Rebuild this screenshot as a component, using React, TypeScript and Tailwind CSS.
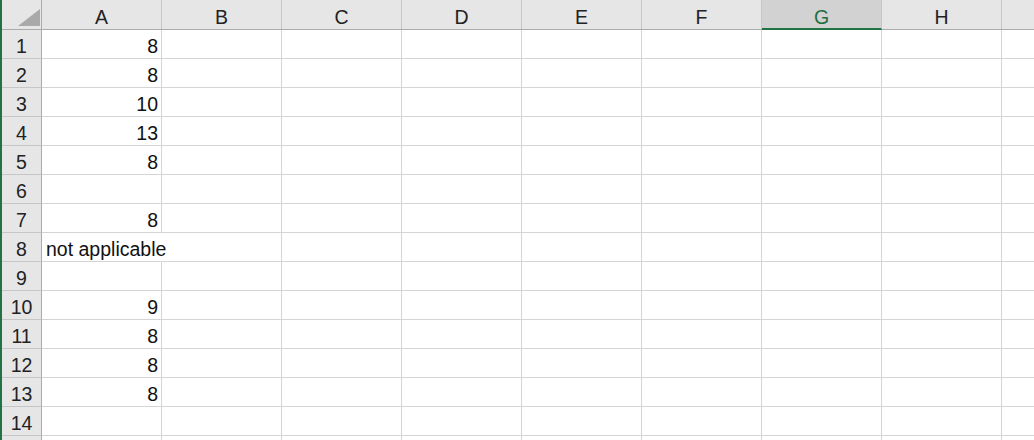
const columns = ['A', 'B', 'C', 'D', 'E', 'F', 'G', 'H']

// column A values, row 1..14 ('' = empty); row 15 is only partly visible
const values: string[] = ['8', '8', '10', '13', '8', '', '8', 'not applicable', '', '9', '8', '8', '8', '', '']

function isNumber(v: string) {
  return v !== '' && !isNaN(Number(v))
}

export default function App() {
  return (
    <div className="flex h-[440px] w-[1034px] overflow-hidden bg-white font-['Liberation_Sans',Arial,sans-serif] text-[19.5px] leading-none text-[#111]">
      {/* Green window edge */}
      <div className="w-[2px] shrink-0 bg-[#217346]" />

      <div className="flex min-w-0 flex-1 flex-col">
        {/* Column headers */}
        <div className="flex h-[30px] shrink-0 border-b border-[#ababab] bg-[#e6e6e6]">
          <div className="flex w-[40px] shrink-0 items-end justify-end border-r border-[#ababab] pr-[1px] pb-[3px]">
            <svg width="22" height="17" viewBox="0 0 22 17">
              <polygon points="0,17 22,17 22,0" fill="#a9a9a9" />
            </svg>
          </div>
          {columns.map((c) =>
            c === 'G' ? (
              <div
                key={c}
                className="-mb-px flex w-[120px] shrink-0 items-end justify-center border-r border-b-2 border-r-[#c6c6c6] border-b-[#217346] bg-[#d2d2d2] pb-[1px] text-[#1f6e43]"
              >
                {c}
              </div>
            ) : (
              <div
                key={c}
                className="flex w-[120px] shrink-0 items-end justify-center border-r border-[#c6c6c6] pb-[2px] text-[#222]"
              >
                {c}
              </div>
            )
          )}
          <div className="flex-1" />
        </div>

        {/* Rows */}
        {values.map((v, i) => (
          <div key={i} className="flex h-[29px] shrink-0">
            <div className="flex w-[40px] shrink-0 items-end justify-center border-r border-b border-r-[#ababab] border-b-[#c6c6c6] bg-[#e6e6e6] pb-[2px] text-[#222]">
              {i < 14 ? i + 1 : ''}
            </div>
            {isNumber(v) || v === '' ? (
              <div className="flex w-[120px] shrink-0 items-end justify-end border-r border-b border-[#d4d4d4] pr-[3px] pb-[2px]">
                {v}
              </div>
            ) : (
              <div className="flex w-[120px] shrink-0 items-end justify-start border-r border-b border-r-transparent border-b-[#d4d4d4] pl-[4px] pb-[2px] whitespace-nowrap">
                {v}
              </div>
            )}
            {columns.slice(1).map((c) => (
              <div key={c} className="w-[120px] shrink-0 border-r border-b border-[#d4d4d4]" />
            ))}
            <div className="flex-1 border-b border-[#d4d4d4]" />
          </div>
        ))}
      </div>
    </div>
  )
}
